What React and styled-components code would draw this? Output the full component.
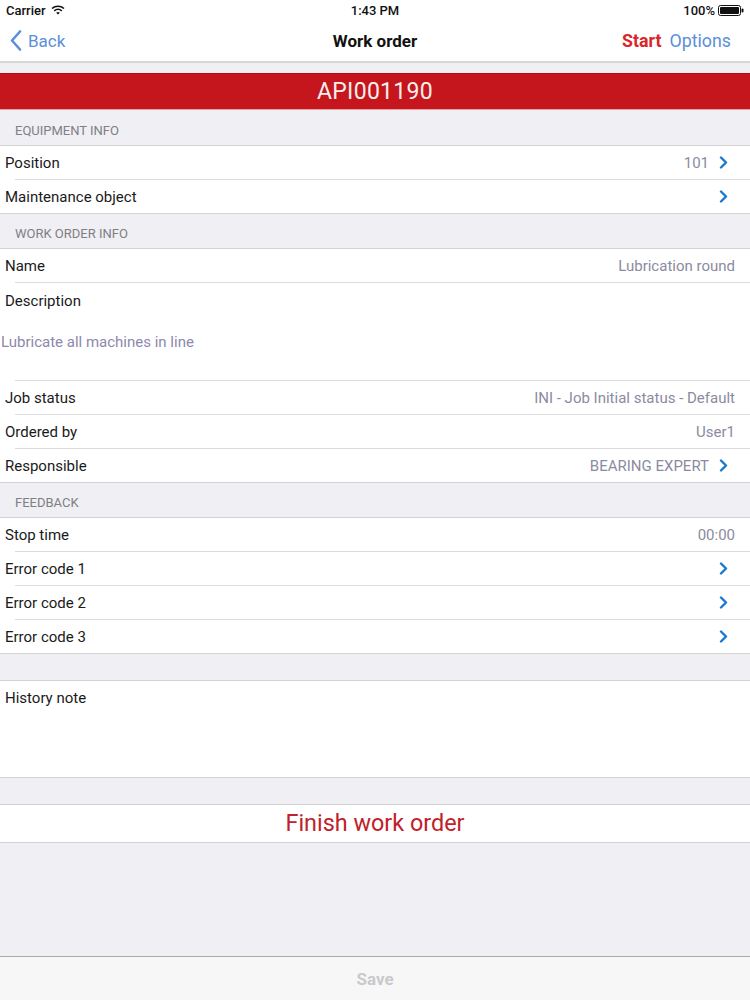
import React from "react";
import styled, { createGlobalStyle } from "styled-components";

const Global = createGlobalStyle`
  html, body { margin: 0; padding: 0; }
  body {
    font-family: Roboto, "Liberation Sans", sans-serif;
    background: #efeff4;
    -webkit-font-smoothing: antialiased;
  }
`;

const Screen = styled.div`
  width: 750px;
  height: 1000px;
  display: flex;
  flex-direction: column;
  background: #efeff4;
  overflow: hidden;
`;

const Top = styled.div`
  background: #fff;
  border-bottom: 2px solid #d6d6d8;
`;

const StatusBar = styled.div`
  height: 20px;
  display: grid;
  grid-template-columns: 1fr auto 1fr;
  align-items: center;
  padding: 0 6px;
  font-size: 13px;
  font-weight: 500;
  color: #111;
`;

const StatusLeft = styled.div`
  display: flex;
  align-items: center;
  gap: 5px;
`;

const StatusRight = styled.div`
  display: flex;
  justify-content: flex-end;
  align-items: center;
  gap: 3px;
`;

const NavBar = styled.div`
  height: 41px;
  display: grid;
  grid-template-columns: 1fr auto 1fr;
  align-items: center;
  padding: 0 10px;
`;

const BackBtn = styled.div`
  display: flex;
  align-items: center;
  gap: 6px;
  color: #5b8fd9;
  font-size: 17px;
`;

const NavTitle = styled.div`
  font-size: 17px;
  font-weight: 700;
  color: #111;
`;

const NavRight = styled.div`
  display: flex;
  justify-content: flex-end;
  gap: 8px;
  font-size: 17.8px;
  padding-right: 9px;
`;

const NavAction = styled.span`
  color: ${(p) => (p.$red ? "#d9262b" : "#5b8fd9")};
  font-weight: ${(p) => (p.$red ? 700 : 400)};
`;

const Content = styled.div`
  flex: 1;
  display: flex;
  flex-direction: column;
  padding-top: 10px;
`;

const Banner = styled.div`
  background: #c4161c;
  border-top: 1px solid #a90f14;
  border-bottom: 1px solid #e8a0a3;
  box-sizing: border-box;
  height: 37px;
  display: flex;
  align-items: center;
  justify-content: center;
  color: #fbeeee;
  font-size: 23px;
  letter-spacing: 0.3px;
`;

const SectionHeader = styled.div`
  height: ${(p) => p.$h || 35}px;
  box-sizing: border-box;
  display: flex;
  align-items: center;
  padding: 5px 0 0 15px;
  font-size: 13px;
  color: #7f7f85;
  text-transform: uppercase;
  border-bottom: 1px solid #d3d3d6;
`;

const Gap = styled.div`
  height: ${(p) => p.$h}px;
  border-bottom: 1px solid #d3d3d6;
`;

const Group = styled.div`
  background: #fff;
`;

const Row = styled.div`
  position: relative;
  height: ${(p) => p.$h || 34}px;
  box-sizing: border-box;
  display: flex;
  flex-direction: ${(p) => (p.$stack ? "column" : "row")};
  align-items: ${(p) => (p.$stack ? "flex-start" : "center")};
  padding: ${(p) => (p.$stack ? "9px 0 0 0" : "0 15px 1px 5px")};
  font-size: 15px;
  color: #1a1a1a;
  &::after {
    content: "";
    position: absolute;
    left: ${(p) => (p.$last ? 0 : 15)}px;
    right: 0;
    bottom: 0;
    height: 1px;
    background: ${(p) => (p.$last ? "#d3d3d6" : "#dcdcdf")};
  }
`;

const Label = styled.span`
  flex: 1;
`;

const Value = styled.span`
  color: #8b8b9f;
  font-size: 15px;
`;

const Chevron = styled.span`
  display: flex;
  width: 20px;
  margin-left: 4px;
  margin-right: 2px;
  justify-content: center;
`;

const DescLabel = styled.div`
  padding-left: 5px;
  font-size: 15px;
  color: #1a1a1a;
`;

const DescValue = styled.div`
  padding: 23px 0 0 1px;
  font-size: 15px;
  color: #8d88ad;
`;

const NoteBox = styled.div`
  height: 97px;
  background: #fff;
  border-bottom: 1px solid #d3d3d6;
  padding: 8px 5px;
  box-sizing: border-box;
  font-size: 15px;
  color: #1a1a1a;
`;

const FinishButton = styled.div`
  height: 38px;
  box-sizing: border-box;
  background: #fff;
  border-bottom: 1px solid #d3d3d6;
  display: flex;
  align-items: center;
  justify-content: center;
  padding-bottom: 2px;
  font-size: 23.4px;
  color: #c0212b;
`;

const Spacer = styled.div`
  flex: 1;
`;

const BottomBar = styled.div`
  height: 43px;
  border-top: 1px solid #a9a9ae;
  background: #f7f7f8;
  display: flex;
  align-items: center;
  justify-content: center;
  font-size: 17px;
  font-weight: 700;
  color: #c9c9cc;
`;

const ChevronIcon = () => (
  <svg width="9" height="13" viewBox="0 0 9 13">
    <path d="M2 1.5 L7 6.5 L2 11.5" fill="none" stroke="#1a78d2" strokeWidth="2.4" strokeLinecap="round" strokeLinejoin="round" />
  </svg>
);

const Wifi = () => (
  <svg width="14" height="10" viewBox="0 0 14 10">
    <path d="M1 3.5 A9 9 0 0 1 13 3.5" fill="none" stroke="#111" strokeWidth="1.6" />
    <path d="M3.2 5.8 A6 6 0 0 1 10.8 5.8" fill="none" stroke="#111" strokeWidth="1.6" />
    <path d="M7 9.6 L5.2 7.8 A2.6 2.6 0 0 1 8.8 7.8 Z" fill="#111" />
  </svg>
);

const Battery = () => (
  <svg width="26" height="11" viewBox="0 0 26 11">
    <rect x="0.5" y="0.5" width="22" height="10" rx="2" fill="none" stroke="#111" />
    <rect x="2" y="2" width="19" height="7" rx="1" fill="#111" />
    <rect x="23.5" y="3.5" width="2" height="4" rx="1" fill="#111" />
  </svg>
);

const BackChevron = () => (
  <svg width="12" height="21" viewBox="0 0 12 21">
    <path d="M10 1.5 L2 10.5 L10 19.5" fill="none" stroke="#5b8fd9" strokeWidth="2.6" strokeLinecap="round" strokeLinejoin="round" />
  </svg>
);

const Item = ({ label, value, chevron, last }) => (
  <Row $last={last}>
    <Label>{label}</Label>
    {value && <Value>{value}</Value>}
    {chevron && (
      <Chevron>
        <ChevronIcon />
      </Chevron>
    )}
  </Row>
);

export default function App() {
  return (
    <Screen>
      <Global />
      <Top>
        <StatusBar>
          <StatusLeft>
            Carrier <Wifi />
          </StatusLeft>
          <div>1:43 PM</div>
          <StatusRight>
            100% <Battery />
          </StatusRight>
        </StatusBar>
        <NavBar>
          <BackBtn>
            <BackChevron /> Back
          </BackBtn>
          <NavTitle>Work order</NavTitle>
          <NavRight>
            <NavAction $red>Start</NavAction>
            <NavAction>Options</NavAction>
          </NavRight>
        </NavBar>
      </Top>
      <Content>
        <Banner>API001190</Banner>
        <SectionHeader $h={36}>Equipment info</SectionHeader>
        <Group>
          <Item label="Position" value="101" chevron />
          <Item last label="Maintenance object" chevron />
        </Group>
        <SectionHeader>Work order info</SectionHeader>
        <Group>
          <Item label="Name" value="Lubrication round" />
          <Row $stack $h={98}>
            <DescLabel>Description</DescLabel>
            <DescValue>Lubricate all machines in line</DescValue>
          </Row>
          <Item label="Job status" value="INI - Job Initial status - Default" />
          <Item label="Ordered by" value="User1" />
          <Item last label="Responsible" value="BEARING EXPERT" chevron />
        </Group>
        <SectionHeader>Feedback</SectionHeader>
        <Group>
          <Item label="Stop time" value="00:00" />
          <Item label="Error code 1" chevron />
          <Item label="Error code 2" chevron />
          <Item last label="Error code 3" chevron />
        </Group>
        <Gap $h={26} />
        <NoteBox>History note</NoteBox>
        <Gap $h={26} />
        <FinishButton>Finish work order</FinishButton>
        <Spacer />
        <BottomBar>Save</BottomBar>
      </Content>
    </Screen>
  );
}
